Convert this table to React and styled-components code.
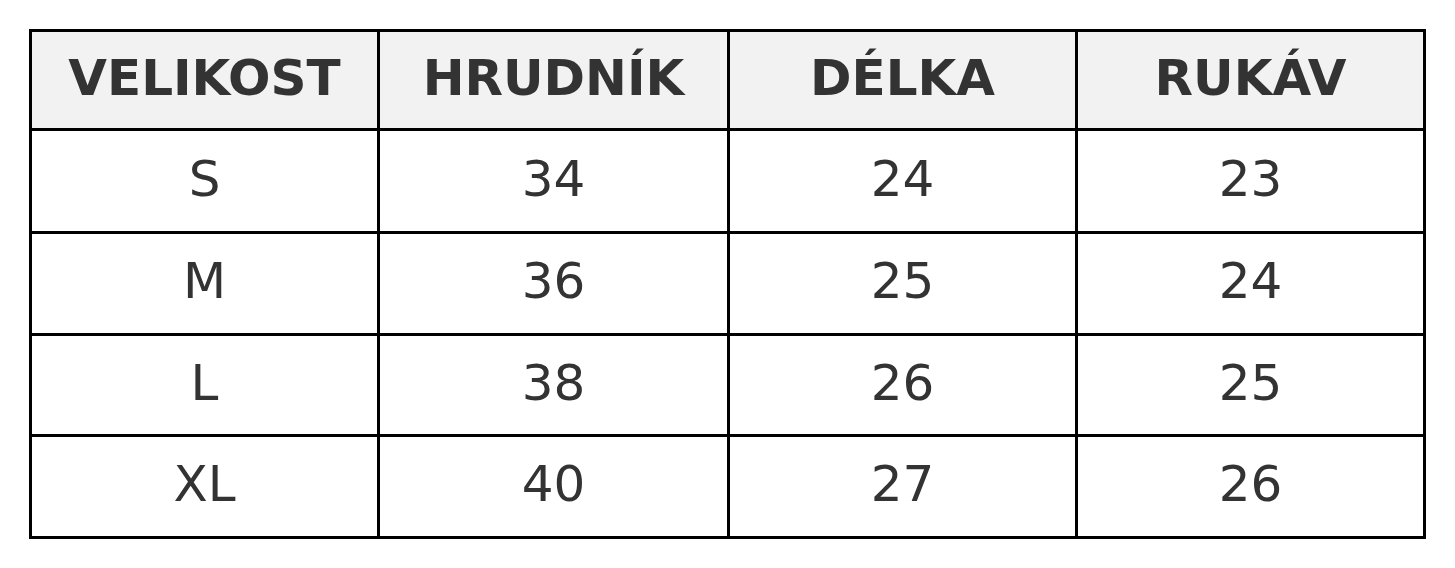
import React from "react";
import styled, { createGlobalStyle } from "styled-components";

const GlobalStyle = createGlobalStyle`
  html, body {
    margin: 0;
    padding: 0;
    background: #ffffff;
  }
`;

const Page = styled.div`
  padding: 29px 0 0 29px;
  font-family: "DejaVu Sans", "Liberation Sans", sans-serif;
`;

const Grid = styled.div`
  display: grid;
  grid-template-columns: 345px 347px 345px 345px;
  grid-template-rows: 96px 100px 99px 98px 99px;
  gap: 3px;
  padding: 3px;
  width: max-content;
  background: #000000;
`;

const Cell = styled.div`
  display: flex;
  align-items: center;
  justify-content: center;
  padding-bottom: 5px;
  background: ${(p) => (p.$head ? "#f2f2f2" : "#ffffff")};
  color: #333333;
  font-size: 50px;
  font-weight: ${(p) => (p.$head ? 700 : 400)};
`;

const headers = ["VELIKOST", "HRUDNÍK", "DÉLKA", "RUKÁV"];
const rows = [
  ["S", "34", "24", "23"],
  ["M", "36", "25", "24"],
  ["L", "38", "26", "25"],
  ["XL", "40", "27", "26"],
];

export default function App() {
  return (
    <>
      <GlobalStyle />
      <Page>
        <Grid>
          {headers.map((h) => (
            <Cell key={h} $head>
              {h}
            </Cell>
          ))}
          {rows.map((row) =>
            row.map((v, i) => <Cell key={row[0] + i}>{v}</Cell>)
          )}
        </Grid>
      </Page>
    </>
  );
}
